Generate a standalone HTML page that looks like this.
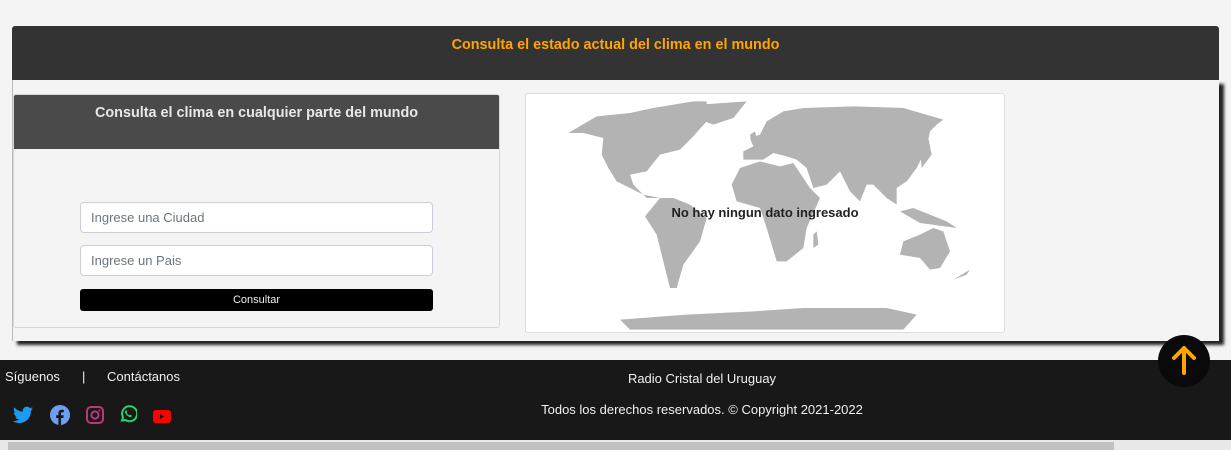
<!DOCTYPE html>
<html><head><meta charset="utf-8"><style>
*{box-sizing:border-box;margin:0;padding:0}
body{width:1231px;height:450px;background:#f4f4f4;font-family:"Liberation Sans",Arial,sans-serif;position:relative;overflow:hidden}
.hdr{position:absolute;left:12px;top:26px;width:1207px;height:54px;background:#333;border-radius:3px 3px 0 0;color:#ffa500;font-weight:bold;font-size:14.4px;text-align:center;padding-top:11px}
.body{position:absolute;left:12px;top:80px;width:1207px;height:261px;background:#f4f4f4;box-shadow:5px 4px 3px #222;border-left:1px solid #bbb}
.panel{position:absolute;left:13px;top:94px;width:487px;height:234px;border:1px solid #d6d6d6;border-radius:3px;background:#f4f4f4;overflow:hidden}
.ph{height:54px;background:#4a4a4a;color:#e8e8e8;font-weight:bold;font-size:14.4px;text-align:center;padding-top:10px}
.inp{position:absolute;left:66px;width:353px;height:31px;background:#fff;border:1px solid #ccd;border-radius:4px;color:#6c757d;font-size:13px;padding:7px 10px}
.btn{position:absolute;left:66px;top:194px;width:353px;height:22px;background:#000;border-radius:3px;color:#eee;font-size:11px;text-align:center;line-height:22px}
.map{position:absolute;left:525px;top:93px;width:480px;height:240px;background:#fff;border:1px solid #ddd;border-radius:3px;overflow:hidden}
.ft{position:absolute;left:0;top:360px;width:1231px;height:80px;background:#181818;color:#f0f0f0;font-size:13px}
.sb{position:absolute;left:0;top:440px;width:1231px;height:10px;background:#e8e8e8}
.sb div{position:absolute;left:8px;top:2px;width:1106px;height:8px;background:#c1c1c1}
.up{position:absolute;left:1158px;top:335px;width:52px;height:52px;border-radius:50%;background:#0a0a0a}
</style></head><body>
<div class="hdr">Consulta el estado actual del clima en el mundo</div>
<div class="body"></div>
<div class="panel"><div class="ph">Consulta el clima en cualquier parte del mundo</div>
<div class="inp" style="top:107px">Ingrese una Ciudad</div>
<div class="inp" style="top:150px">Ingrese un Pais</div>
<div class="btn">Consultar</div></div>
<div class="map"><svg style="position:absolute;left:-6px;top:-6px" width="490" height="250" viewBox="0 0 1470 750"><g fill="#b3b3b3">
<polygon points="145,135 230,85 330,75 400,60 520,40 560,40 560,100 515,150 480,185 420,200 380,250 330,260 340,290 380,330 420,330 370,320 330,300 290,280 265,240 245,200 250,150 190,135"/>
<polygon points="540,50 680,40 640,90 580,110 555,100"/>
<polygon points="375,385 420,330 460,330 510,350 560,390 540,460 490,530 470,600 450,600 430,520 410,440"/>
<polygon points="670,215 670,190 700,175 690,150 720,140 740,100 790,70 850,60 1000,55 1150,60 1270,95 1250,110 1230,130 1220,180 1190,240 1160,280 1130,300 1130,350 1100,330 1060,290 1040,290 1020,340 990,310 960,250 920,290 880,300 860,240 830,215 800,205 760,195 730,215"/>
<polygon points="690,140 705,130 712,160 695,165"/>
<polygon points="1200,180 1225,150 1235,200 1205,240"/>
<polygon points="635,290 660,240 720,220 780,235 820,225 870,300 900,330 860,420 850,480 800,520 770,520 740,420 720,360 650,340"/>
<polygon points="880,440 890,430 895,470 880,480"/>
<polygon points="1140,500 1150,460 1200,440 1240,420 1270,430 1290,490 1260,540 1230,545 1200,510"/>
<polygon points="1140,370 1180,360 1280,400 1310,420 1200,405"/>
<polygon points="1300,575 1350,545 1360,530 1340,560"/>
<polygon points="300,695 500,680 700,670 850,660 1100,660 1190,680 1150,725 330,725"/>
</g></svg>
<div style="position:absolute;left:0;width:100%;top:111px;text-align:center;font-weight:bold;font-size:13px;color:#222">No hay ningun dato ingresado</div></div>
<div class="ft">
<div style="position:absolute;left:5px;top:9px">Síguenos</div>
<div style="position:absolute;left:82px;top:9px">|</div>
<div style="position:absolute;left:107px;top:9px">Contáctanos</div>
<div style="position:absolute;left:0;width:1404px;text-align:center;top:11px">Radio Cristal del Uruguay</div>
<div style="position:absolute;left:0;width:1404px;text-align:center;top:42px">Todos los derechos reservados. © Copyright 2021-2022</div>
<svg style="position:absolute;left:13px;top:46px" width="20" height="18" viewBox="0 0 24 20"><path fill="#1d9bf0" d="M24 2.4c-.9.4-1.8.7-2.8.8 1-.6 1.8-1.6 2.2-2.7-1 .6-2 1-3.1 1.2C19.4.7 18.1 0 16.6 0c-2.7 0-4.9 2.2-4.9 4.9 0 .4 0 .8.1 1.1C7.700 5.8 4.100 3.900 1.700.9c-.4.7-.7 1.6-.7 2.5 0 1.7.9 3.2 2.2 4.1-.8 0-1.6-.2-2.2-.6v.1c0 2.4 1.7 4.4 3.9 4.8-.4.1-.8.2-1.3.2-.3 0-.6 0-.9-.1.6 2 2.4 3.4 4.6 3.4-1.7 1.3-3.8 2.1-6.1 2.1-.4 0-.8 0-1.2-.1C2.2 18.8 4.8 19.6 7.5 19.6c9.1 0 14-7.5 14-14v-.6c1-.7 1.8-1.6 2.5-2.6z"/></svg>
<svg style="position:absolute;left:50px;top:45px" width="20" height="20" viewBox="0 0 20 20"><circle cx="10" cy="10" r="10" fill="#6d9ff1"/><path fill="#181818" d="M11 20v-7h2.3l.4-2.7H11V8.6c0-.8.3-1.3 1.4-1.3h1.4V4.9c-.3 0-1.1-.1-2-.1-2 0-3.400 1.200-3.400 3.500v2H6.2V13h2.2v7z"/></svg>
<svg style="position:absolute;left:86px;top:46px" width="18" height="18" viewBox="0 0 18 18"><rect x="1" y="1" width="16" height="16" rx="4" fill="none" stroke="#c1357a" stroke-width="2"/><circle cx="9" cy="9" r="3.6" fill="none" stroke="#c1357a" stroke-width="2"/><circle cx="13.5" cy="4.5" r="1" fill="#c1357a"/></svg>
<svg style="position:absolute;left:119px;top:45px" width="18" height="18" viewBox="0 0 18 18"><path fill="none" stroke="#25d366" stroke-width="2" d="M3 15.5l1-3.2A7.5 7.5 0 1 1 6.5 15z"/><path fill="#25d366" d="M6.5 5.5c.5-.4 1-.3 1.2.2l.5 1.2c.1.4-.4.8-.5 1 .6 1.2 1.500 2 2.600 2.500.3-.2.6-.7 1-.6l1.300.6c.4.3.2 1-.2 1.300-1.500 1.200-4.800-.8-6.100-3.400-.5-1-.4-2.200.2-2.800z"/></svg>
<svg style="position:absolute;left:153px;top:50px" width="18" height="13" viewBox="0 0 18 13"><rect width="18" height="13" rx="3" fill="#f00"/><path fill="#181818" d="M7 4v5l4-2.5z"/></svg>
</div>
<div class="up"><svg width="52" height="52" viewBox="0 0 52 52"><path d="M26 38V13M16 23l10-10 10 10" fill="none" stroke="#ffa500" stroke-width="4" stroke-linecap="round" stroke-linejoin="round"/></svg></div>
<div class="sb"><div></div></div>
</body></html>
